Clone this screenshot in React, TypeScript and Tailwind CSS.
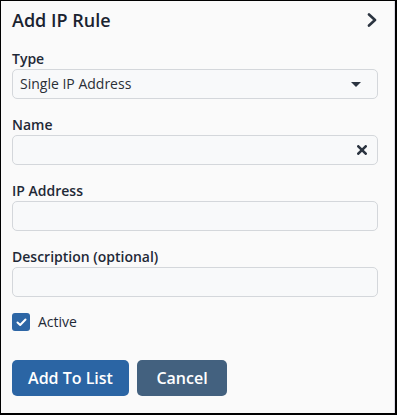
import { useState } from 'react';

const Label = ({ children }: { children: React.ReactNode }) => (
  <label className="block text-sm leading-5 font-semibold text-[#1f2937]">{children}</label>
);

export default function App() {
  const [active, setActive] = useState(true);

  return (
    <div
      className="w-[397px] h-[415px] border-t border-l border-r-2 border-b-2 border-black bg-[#fafafa]"
      style={{ fontFamily: '"Open Sans", "Noto Sans", sans-serif' }}
    >
      <div className="h-full pl-[11px] pr-4 pt-[7px] border-r border-[#dadae4]">
        {/* Header */}
        <div className="flex items-center justify-between h-6">
          <h2 className="text-lg leading-6 font-semibold text-[#1a2330]">Add IP Rule</h2>
          <svg width="10" height="14" viewBox="0 0 10 14" className="mr-px">
            <polyline points="2,1.5 8,7 2,12.5" fill="none" stroke="#2b3440" strokeWidth="2.6" strokeLinecap="round" strokeLinejoin="round" />
          </svg>
        </div>

        {/* Type */}
        <div className="mt-[17px]">
          <Label>Type</Label>
          <div className="flex items-center justify-between h-[30px] px-[7px] pr-4 border border-[#d4d7db] rounded-[5px] bg-[#f8f9fa]">
            <span className="text-sm text-[#2a2f36]">Single IP Address</span>
            <svg width="10" height="5" viewBox="0 0 10 5">
              <polygon points="0,0 10,0 5,5" fill="#2b3440" />
            </svg>
          </div>
        </div>

        {/* Name */}
        <div className="mt-4">
          <Label>Name</Label>
          <div className="flex items-center justify-end h-[30px] pr-[10px] border border-[#d4d7db] rounded-[5px] bg-[#f8f9fa]">
            <svg width="10" height="10" viewBox="0 0 10 10">
              <line x1="1.3" y1="1.3" x2="8.7" y2="8.7" stroke="#2b3440" strokeWidth="2.6" strokeLinecap="round" />
              <line x1="8.7" y1="1.3" x2="1.3" y2="8.7" stroke="#2b3440" strokeWidth="2.6" strokeLinecap="round" />
            </svg>
          </div>
        </div>

        {/* IP Address */}
        <div className="mt-4">
          <Label>IP Address</Label>
          <div className="h-[30px] border border-[#d4d7db] rounded-[5px] bg-[#f8f9fa]" />
        </div>

        {/* Description */}
        <div className="mt-4">
          <Label>Description (optional)</Label>
          <div className="h-[30px] border border-[#d4d7db] rounded-[5px] bg-[#f8f9fa]" />
        </div>

        {/* Active */}
        <div className="mt-4 flex items-center gap-2 h-[18px] cursor-pointer" onClick={() => setActive(!active)}>
          <div className="w-[18px] h-[18px] rounded-[3px] bg-[#2d66a5] flex items-center justify-center">
            {active && (
              <svg width="11" height="9" viewBox="0 0 11 9">
                <polyline points="1.5,4.5 4.2,7 9.5,1.5" fill="none" stroke="#fff" strokeWidth="2" strokeLinecap="round" strokeLinejoin="round" />
              </svg>
            )}
          </div>
          <span className="text-sm leading-5 text-[#1f2937]">Active</span>
        </div>

        {/* Buttons */}
        <div className="mt-[29px] flex gap-2">
          <button className="w-[117px] h-9 rounded-[5px] bg-[#2b65a4] text-white text-base font-semibold">Add To List</button>
          <button className="w-[90px] h-9 rounded-[5px] bg-[#43617f] text-white text-base font-semibold">Cancel</button>
        </div>
      </div>
    </div>
  );
}
